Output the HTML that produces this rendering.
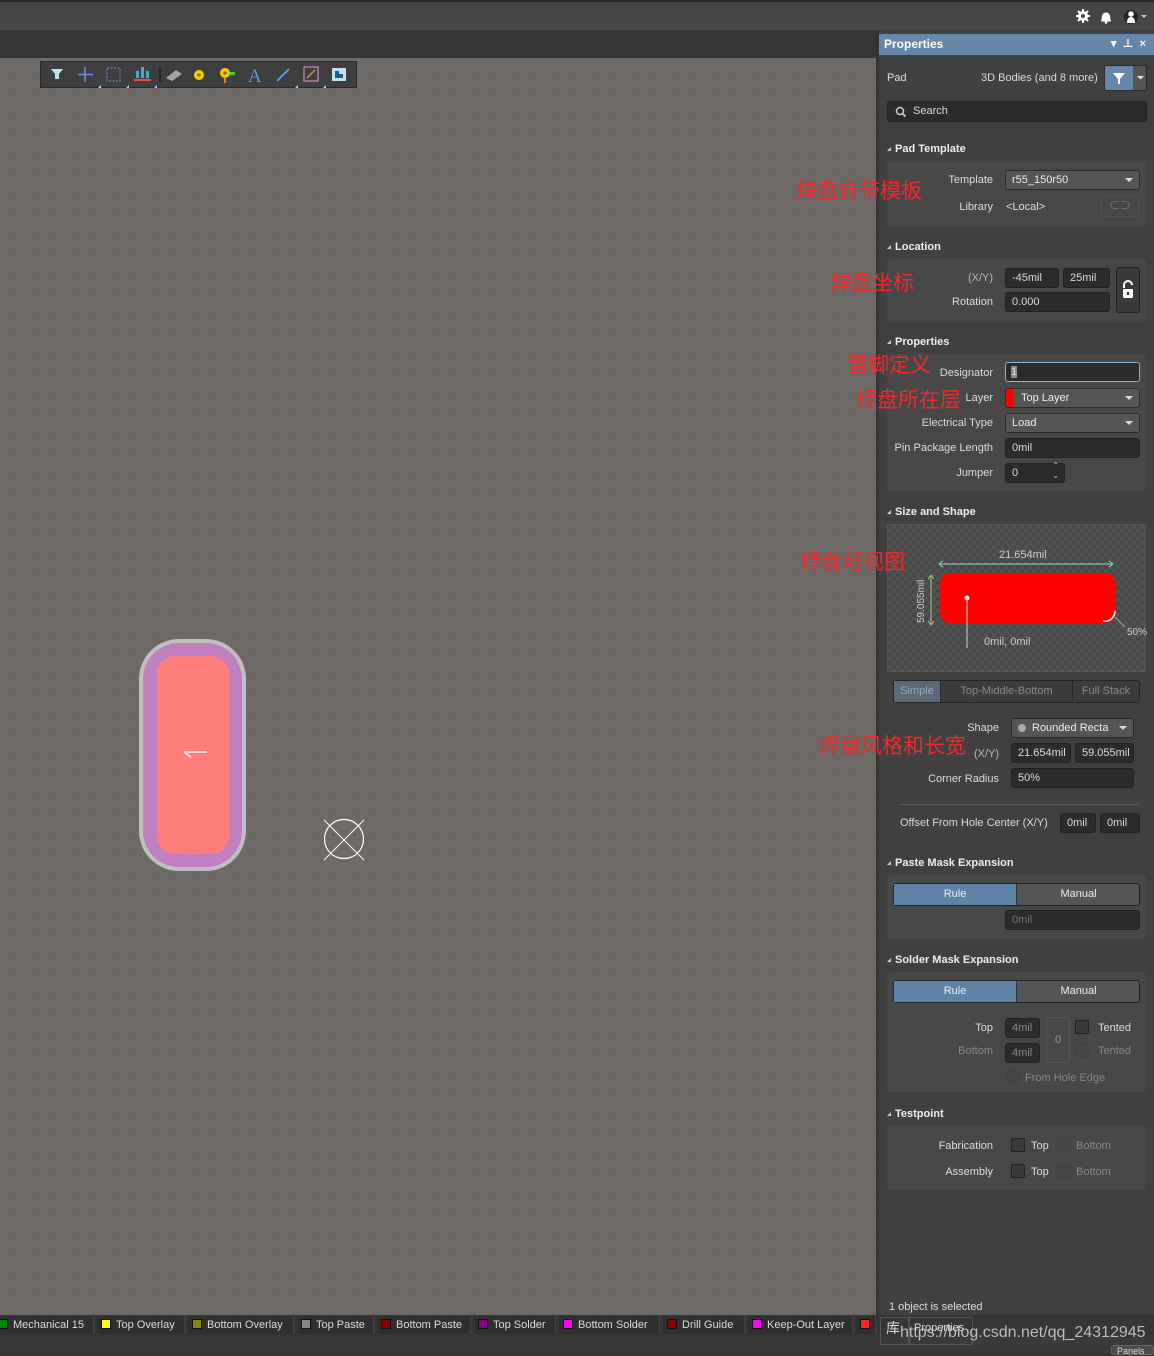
<!DOCTYPE html>
<html><head><meta charset="utf-8"><style>
*{margin:0;padding:0;box-sizing:border-box}
body{width:1154px;height:1353px;position:relative;overflow:hidden;background:#363636;font-family:"Liberation Sans","Noto Sans CJK SC",sans-serif;font-size:11px;color:#ddd}
.a{position:absolute}
.lbl{position:absolute;text-align:right;color:#ddd;font-size:11px}
.inp{position:absolute;background:#2b2b2b;border:1px solid #222;border-radius:3px;color:#ddd;padding-left:6px;font-size:11px;line-height:18px;height:20px}
.dd{position:absolute;background:#555;border:1px solid #2a2a2a;border-radius:3px;color:#eee;padding-left:6px;font-size:11px;line-height:18px;height:20px}
.dd:after{content:"";position:absolute;right:6px;top:7px;border-left:4px solid transparent;border-right:4px solid transparent;border-top:4px solid #ddd}
.sec{position:absolute;left:887px;width:259px;background:#474747;border-radius:3px}
.hd{position:absolute;left:887px;font-weight:bold;color:#eee;font-size:11px}
.hd:before{content:"";display:inline-block;border-left:4px solid transparent;border-bottom:4px solid #ccc;margin-right:4px;vertical-align:1px}
.cn{position:absolute;z-index:5;color:#ee2a2a;font-size:21px;font-family:"Noto Sans CJK SC",sans-serif;line-height:24px;white-space:nowrap}
.cb{position:absolute;width:14px;height:14px;border:1px solid #222;background:#3a3a3a;border-radius:2px}
.cbd{position:absolute;width:14px;height:14px;border:1px solid #404040;background:#454545;border-radius:2px}
.lay{position:absolute;top:1316px;height:18px;background:#2f2f2f;color:#ddd;font-size:11px;line-height:18px;padding-left:19px;border-right:1px solid #444}
.lay i{position:absolute;left:4px;top:3px;width:10px;height:10px;border:1px solid #111}
</style></head><body>
<div class="a" style="left:0;top:0;width:1154px;height:2px;background:#2a2a2a"></div>
<div class="a" style="left:0;top:2px;width:1154px;height:28px;background:#454545"></div>
<svg class="a" style="left:1074px;top:8px" width="80" height="18" viewBox="0 0 80 18">
<circle cx="9" cy="8" r="5" fill="#fff"/><circle cx="9" cy="8" r="2" fill="#454545"/>
<path d="M9 1v14M2 8h14M4 3l10 10M14 3L4 13" stroke="#fff" stroke-width="2"/><circle cx="9" cy="8" r="2" fill="#454545"/>
<path d="M27 13h10M28 12q0-7 4-7t4 7z" fill="#fff" stroke="#fff"/><circle cx="32" cy="14.5" r="1.3" fill="#fff"/>
<circle cx="57" cy="9" r="7" fill="#222"/><circle cx="57" cy="6" r="2.8" fill="#fff"/><path d="M53 15q0-6 4-6t4 6z" fill="#fff"/>
<path d="M67 7l3 3 3-3z" fill="#ccc"/></svg>
<div class="a" style="left:0;top:58px;width:877px;height:1257px;background:#6d6967;background-image:radial-gradient(#5d5a5a 0.7px,transparent 1px);background-size:20px 20px;background-position:4px 6px"></div>
<div class="a" style="left:40px;top:61px;width:317px;height:27px;background:#3e3e3e;border:1px solid #2a2a2a"></div>
<svg class="a" style="left:40px;top:61px" width="317" height="27" viewBox="0 0 317 27">
<path d="M11 8h12l-4 5v5h-4v-5z" fill="#bfe3f0"/>
<path d="M45 6v15M38 13.5h15" stroke="#6d8fdd" stroke-width="1.5"/>
<rect x="67" y="7" width="13" height="13" fill="none" stroke="#6d8fdd" stroke-dasharray="2 1.5"/>
<path d="M96 10h3v7h-3zM101 6h3v11h-3zM106 10h3v7h-3z" fill="#4aa5d8"/><path d="M94 19h17" stroke="#e05050" stroke-width="2"/>
<path d="M120 6v15" stroke="#111"/>
<path d="M126 17l10-8 6 4-10 7z" fill="#9fa8b0"/>
<circle cx="159" cy="14" r="5" fill="#f2d000"/><circle cx="159" cy="14" r="1.8" fill="#8a7000"/>
<circle cx="185" cy="12" r="5" fill="#f2d000"/><circle cx="185" cy="12" r="1.8" fill="#8a7000"/><path d="M190 11h5v3h-5z" fill="#4c4"/><path d="M184 17h2v5h-2z" fill="#e08030"/>
<text x="208" y="21" font-family="Liberation Serif" font-size="19" fill="#5d96dc">A</text>
<path d="M237 20l12-12" stroke="#5d96dc" stroke-width="2"/>
<rect x="264" y="6" width="14" height="14" fill="none" stroke="#e59ad8"/><path d="M267 17l8-8" stroke="#d8903a" stroke-width="1.5"/>
<rect x="292" y="7" width="14" height="13" fill="#bfe3f0"/><rect x="295" y="10" width="8" height="7" fill="#1a5c8a"/><rect x="299" y="10" width="4" height="3" fill="#bfe3f0"/>
<path d="M58 27l3-3v3zM86 27l3-3v3zM114 27l3-3v3zM255 27l3-3v3zM283 27l3-3v3z" fill="#ccc"/>
</svg>
<div class="a" style="left:139px;top:639px;width:107px;height:232px;border-radius:40px;background:#bfbfbf"></div>
<div class="a" style="left:143px;top:643px;width:99px;height:224px;border-radius:36px;background:#c07fc0"></div>
<div class="a" style="left:157px;top:656px;width:72px;height:198px;border-radius:18px;background:#ff7d7a"></div>
<svg class="a" style="left:180px;top:748px" width="30" height="14"><path d="M4 4h23M4 4l7 5" stroke="#ffd8d8" stroke-width="2" fill="none"/></svg>
<svg class="a" style="left:322px;top:818px" width="44" height="44"><circle cx="22" cy="21" r="19.5" fill="none" stroke="#fff" stroke-width="1.2"/><path d="M2 2l40 40M42 2L2 42" stroke="#fff" stroke-width="1"/></svg>
<!-- panel -->
<div class="a" style="left:876px;top:30px;width:278px;height:1285px;background:#404040;border-left:3px solid #333"></div>
<div class="a" style="left:879px;top:34px;width:275px;height:21px;background:#6588a8;color:#fff;font-weight:bold;font-size:12px;line-height:20px;padding-left:5px">Properties
<span style="position:absolute;right:8px;top:0;font-size:11px">▾ &nbsp;⊥ &nbsp;×</span></div>
<div class="a" style="left:887px;top:72px;color:#ddd">Pad</div>
<div class="a" style="left:981px;top:72px;color:#ddd">3D Bodies (and 8 more)</div>
<div class="a" style="left:1104px;top:65px;width:43px;height:26px;background:#555;border:1px solid #2a2a2a;border-radius:3px"></div>
<div class="a" style="left:1105px;top:66px;width:28px;height:24px;background:#6588a8;border-radius:2px 0 0 2px"></div>
<svg class="a" style="left:1105px;top:66px" width="42" height="24"><path d="M8 7h12l-5 6v5h-2v-5z" fill="#fff"/><path d="M32 10h7l-3.5 3.5z" fill="#ddd"/></svg>
<div class="inp" style="left:887px;top:101px;width:260px;height:21px;padding-left:25px;line-height:19px;border-radius:3px">Search</div>
<svg class="a" style="left:894px;top:105px" width="14" height="14"><circle cx="6" cy="6" r="3.5" fill="none" stroke="#ccc" stroke-width="1.5"/><path d="M8.5 8.5l3 3" stroke="#ccc" stroke-width="1.8"/></svg>

<div class="hd" style="top:143px">Pad Template</div>
<div class="sec" style="top:161px;height:65px"></div>
<div class="lbl" style="left:900px;width:93px;top:174px">Template</div>
<div class="dd" style="left:1005px;top:170px;width:135px">r55_150r50</div>
<div class="lbl" style="left:900px;width:93px;top:201px">Library</div>
<div class="a" style="left:1006px;top:201px">&lt;Local&gt;</div>
<div class="a" style="left:1101px;top:195px;width:38px;height:22px;border:1px solid #505050;border-radius:3px;background:#464646;color:#777;text-align:center;line-height:20px">⊂⊃</div>

<div class="hd" style="top:241px">Location</div>
<div class="sec" style="top:259px;height:62px"></div>
<div class="lbl" style="left:900px;width:93px;top:272px;color:#bbb">(X/Y)</div>
<div class="inp" style="left:1005px;top:268px;width:54px">-45mil</div>
<div class="inp" style="left:1063px;top:268px;width:47px">25mil</div>
<div class="lbl" style="left:900px;width:93px;top:296px">Rotation</div>
<div class="inp" style="left:1005px;top:292px;width:105px">0.000</div>
<div class="a" style="left:1116px;top:267px;width:24px;height:46px;background:#3a3a3a;border:1px solid #222;border-radius:3px"></div>
<svg class="a" style="left:1120px;top:280px" width="16" height="20"><path d="M4 8V5a4 4 0 0 1 8 0" fill="none" stroke="#fff" stroke-width="2"/><rect x="3" y="9" width="10" height="9" rx="1" fill="#fff"/><rect x="7" y="12" width="2" height="3" fill="#333"/></svg>

<div class="hd" style="top:336px">Properties</div>
<div class="sec" style="top:354px;height:137px"></div>
<div class="lbl" style="left:900px;width:93px;top:367px">Designator</div>
<div class="inp" style="left:1005px;top:362px;width:135px;border-color:#8ab0d8;padding-left:5px"><span style="background:#888;color:#ddd">1</span></div>
<div class="lbl" style="left:900px;width:93px;top:392px">Layer</div>
<div class="dd" style="left:1005px;top:388px;width:135px;padding-left:15px">Top Layer</div>
<div class="a" style="left:1006px;top:389px;width:8px;height:18px;background:#f00;border-radius:2px 0 0 2px"></div>
<div class="lbl" style="left:880px;width:113px;top:417px">Electrical Type</div>
<div class="dd" style="left:1005px;top:413px;width:135px">Load</div>
<div class="lbl" style="left:880px;width:113px;top:442px">Pin Package Length</div>
<div class="inp" style="left:1005px;top:438px;width:135px">0mil</div>
<div class="lbl" style="left:900px;width:93px;top:467px">Jumper</div>
<div class="inp" style="left:1005px;top:463px;width:60px">0<span style="position:absolute;right:5px;top:-3px;font-size:8px;line-height:10px;color:#ccc">⌃<br>⌄</span></div>

<div class="hd" style="top:506px">Size and Shape</div>
<div class="a" style="left:887px;top:524px;width:259px;height:148px;background-color:#484848;background-image:linear-gradient(45deg,#525252 25%,transparent 25%,transparent 75%,#525252 75%),linear-gradient(45deg,#525252 25%,transparent 25%,transparent 75%,#525252 75%);background-size:8px 8px;background-position:0 0,4px 4px;border:1px solid #555"></div>
<div class="a" style="left:999px;top:549px;color:#ccc">21.654mil</div>
<svg class="a" style="left:900px;top:555px" width="254" height="100">
<path d="M39 9h174M39 9l4-3M39 9l4 3M213 9l-4-3M213 9l-4 3" stroke="#7fd8d0" fill="none"/>
<path d="M31 20v50M31 20l-3 4M31 20l3 4M31 70l-3-4M31 70l3-4" stroke="#a8cc70" fill="none"/>
<rect x="40" y="18" width="175" height="50" rx="10" fill="#f00"/>
<circle cx="67" cy="43" r="2.5" fill="#eee"/><path d="M67 43v50" stroke="#ccc"/>
<path d="M203 66a10 10 0 0 0 12-10" fill="none" stroke="#eee" stroke-width="1.5"/>
<path d="M215 62l10 10" stroke="#aaa"/>
<text x="-68" y="24" transform="rotate(-90)" font-family="Liberation Sans" font-size="10" fill="#ccc">59.055mil</text>
</svg>
<div class="a" style="left:984px;top:636px;color:#ccc">0mil, 0mil</div>
<div class="a" style="left:1127px;top:627px;color:#ccc;font-size:10px">50%</div>
<div class="a" style="left:893px;top:680px;width:247px;height:23px;background:#3c3c3c;border:1px solid #252525;border-radius:3px"></div>
<div class="a" style="left:894px;top:681px;width:46px;height:21px;background:#5b6878;color:#9ab;text-align:center;line-height:21px">Simple</div>
<div class="a" style="left:940px;top:681px;width:133px;height:21px;border-left:1px solid #2a2a2a;border-right:1px solid #2a2a2a;color:#888;text-align:center;line-height:21px">Top-Middle-Bottom</div>
<div class="a" style="left:1073px;top:681px;width:66px;height:21px;color:#888;text-align:center;line-height:21px">Full Stack</div>
<div class="lbl" style="left:900px;width:99px;top:722px">Shape</div>
<div class="dd" style="left:1011px;top:718px;width:123px;padding-left:20px">Rounded Recta</div>
<div class="a" style="left:1018px;top:724px;width:8px;height:8px;border-radius:50%;background:#aaa"></div>
<div class="lbl" style="left:900px;width:99px;top:748px;color:#bbb">(X/Y)</div>
<div class="inp" style="left:1011px;top:743px;width:60px">21.654mil</div>
<div class="inp" style="left:1075px;top:743px;width:59px">59.055mil</div>
<div class="lbl" style="left:900px;width:99px;top:773px">Corner Radius</div>
<div class="inp" style="left:1011px;top:768px;width:123px">50%</div>
<div class="a" style="left:900px;top:804px;width:239px;height:1px;background:#5a5a5a"></div>
<div class="a" style="left:900px;top:817px">Offset From Hole Center (X/Y)</div>
<div class="inp" style="left:1060px;top:813px;width:36px">0mil</div>
<div class="inp" style="left:1100px;top:813px;width:40px">0mil</div>

<div class="hd" style="top:857px">Paste Mask Expansion</div>
<div class="sec" style="top:875px;height:64px"></div>
<div class="a" style="left:893px;top:883px;width:247px;height:23px;background:#555;border:1px solid #222;border-radius:3px"></div>
<div class="a" style="left:894px;top:884px;width:123px;height:21px;background:#5f83a6;color:#eee;text-align:center;line-height:21px;border-right:1px solid #333">Rule</div>
<div class="a" style="left:1018px;top:884px;width:121px;color:#eee;text-align:center;line-height:21px">Manual</div>
<div class="inp" style="left:1005px;top:910px;width:135px;color:#777">0mil</div>

<div class="hd" style="top:954px">Solder Mask Expansion</div>
<div class="sec" style="top:972px;height:120px"></div>
<div class="a" style="left:893px;top:980px;width:247px;height:23px;background:#555;border:1px solid #222;border-radius:3px"></div>
<div class="a" style="left:894px;top:981px;width:123px;height:21px;background:#5f83a6;color:#eee;text-align:center;line-height:21px;border-right:1px solid #333">Rule</div>
<div class="a" style="left:1018px;top:981px;width:121px;color:#eee;text-align:center;line-height:21px">Manual</div>
<div class="lbl" style="left:900px;width:93px;top:1022px">Top</div>
<div class="lbl" style="left:900px;width:93px;top:1045px;color:#888">Bottom</div>
<div class="inp" style="left:1005px;top:1018px;width:35px;color:#888">4mil</div>
<div class="inp" style="left:1005px;top:1043px;width:35px;color:#888">4mil</div>
<div class="a" style="left:1046px;top:1017px;width:24px;height:46px;border:1px solid #555;border-radius:3px;color:#999;text-align:center;line-height:44px">0</div>
<div class="cb" style="left:1075px;top:1020px"></div><div class="a" style="left:1098px;top:1022px">Tented</div>
<div class="cbd" style="left:1075px;top:1043px"></div><div class="a" style="left:1098px;top:1045px;color:#888">Tented</div>
<div class="cbd" style="left:1006px;top:1070px"></div><div class="a" style="left:1025px;top:1072px;color:#888">From Hole Edge</div>

<div class="hd" style="top:1108px">Testpoint</div>
<div class="sec" style="top:1126px;height:64px"></div>
<div class="lbl" style="left:900px;width:93px;top:1140px">Fabrication</div>
<div class="cb" style="left:1011px;top:1138px"></div><div class="a" style="left:1031px;top:1140px">Top</div>
<div class="cbd" style="left:1057px;top:1138px"></div><div class="a" style="left:1076px;top:1140px;color:#888">Bottom</div>
<div class="lbl" style="left:900px;width:93px;top:1166px">Assembly</div>
<div class="cb" style="left:1011px;top:1164px"></div><div class="a" style="left:1031px;top:1166px">Top</div>
<div class="cbd" style="left:1057px;top:1164px"></div><div class="a" style="left:1076px;top:1166px;color:#888">Bottom</div>

<div class="a" style="left:889px;top:1301px">1 object is selected</div>
<!-- red annotations (on top) -->
<div class="cn" style="left:796px;top:178px">焊盘自带模板</div>
<div class="cn" style="left:830px;top:270px">焊盘坐标</div>
<div class="cn" style="left:847px;top:352px">管脚定义</div>
<div class="cn" style="left:856px;top:387px">焊盘所在层</div>
<div class="cn" style="left:800px;top:549px">焊盘可视图</div>
<div class="cn" style="left:819px;top:733px">焊盘风格和长宽</div>
<!-- bottom bar -->
<div class="a" style="left:0;top:1315px;width:1154px;height:22px;background:#363636"></div>
<div class="a" style="left:0;top:1337px;width:1154px;height:16px;background:#3a3a3a"></div>
<div class="lay" style="left:-6px;width:100px"><i style="background:#080"></i>Mechanical 15</div>
<div class="lay" style="left:97px;width:88px"><i style="background:#ff0"></i>Top Overlay</div>
<div class="lay" style="left:188px;width:106px"><i style="background:#880"></i>Bottom Overlay</div>
<div class="lay" style="left:297px;width:77px"><i style="background:#888"></i>Top Paste</div>
<div class="lay" style="left:377px;width:94px"><i style="background:#800"></i>Bottom Paste</div>
<div class="lay" style="left:474px;width:82px"><i style="background:#808"></i>Top Solder</div>
<div class="lay" style="left:559px;width:101px"><i style="background:#f0f"></i>Bottom Solder</div>
<div class="lay" style="left:663px;width:82px"><i style="background:#800"></i>Drill Guide</div>
<div class="lay" style="left:748px;width:105px"><i style="background:#f0f"></i>Keep-Out Layer</div>
<div class="lay" style="left:856px;width:20px"><i style="background:#f22"></i></div>
<div class="a" style="left:880px;top:1317px;width:29px;height:28px;border:1px solid #555;font-size:14px;padding-left:5px;color:#ddd">库</div>
<div class="a" style="left:909px;top:1317px;width:64px;height:28px;border:1px solid #555;padding:4px 0 0 4px">Properties</div>
<div class="a" style="left:900px;top:1324px;font-size:16px;color:#ccc;opacity:.9;white-space:nowrap">https://blog.csdn.net/qq_24312945</div>
<div class="a" style="left:1111px;top:1345px;width:43px;height:10px;background:#4a4a4a;border:1px solid #666;border-radius:3px;font-size:9px;padding-left:5px">Panels</div>
</body></html>
